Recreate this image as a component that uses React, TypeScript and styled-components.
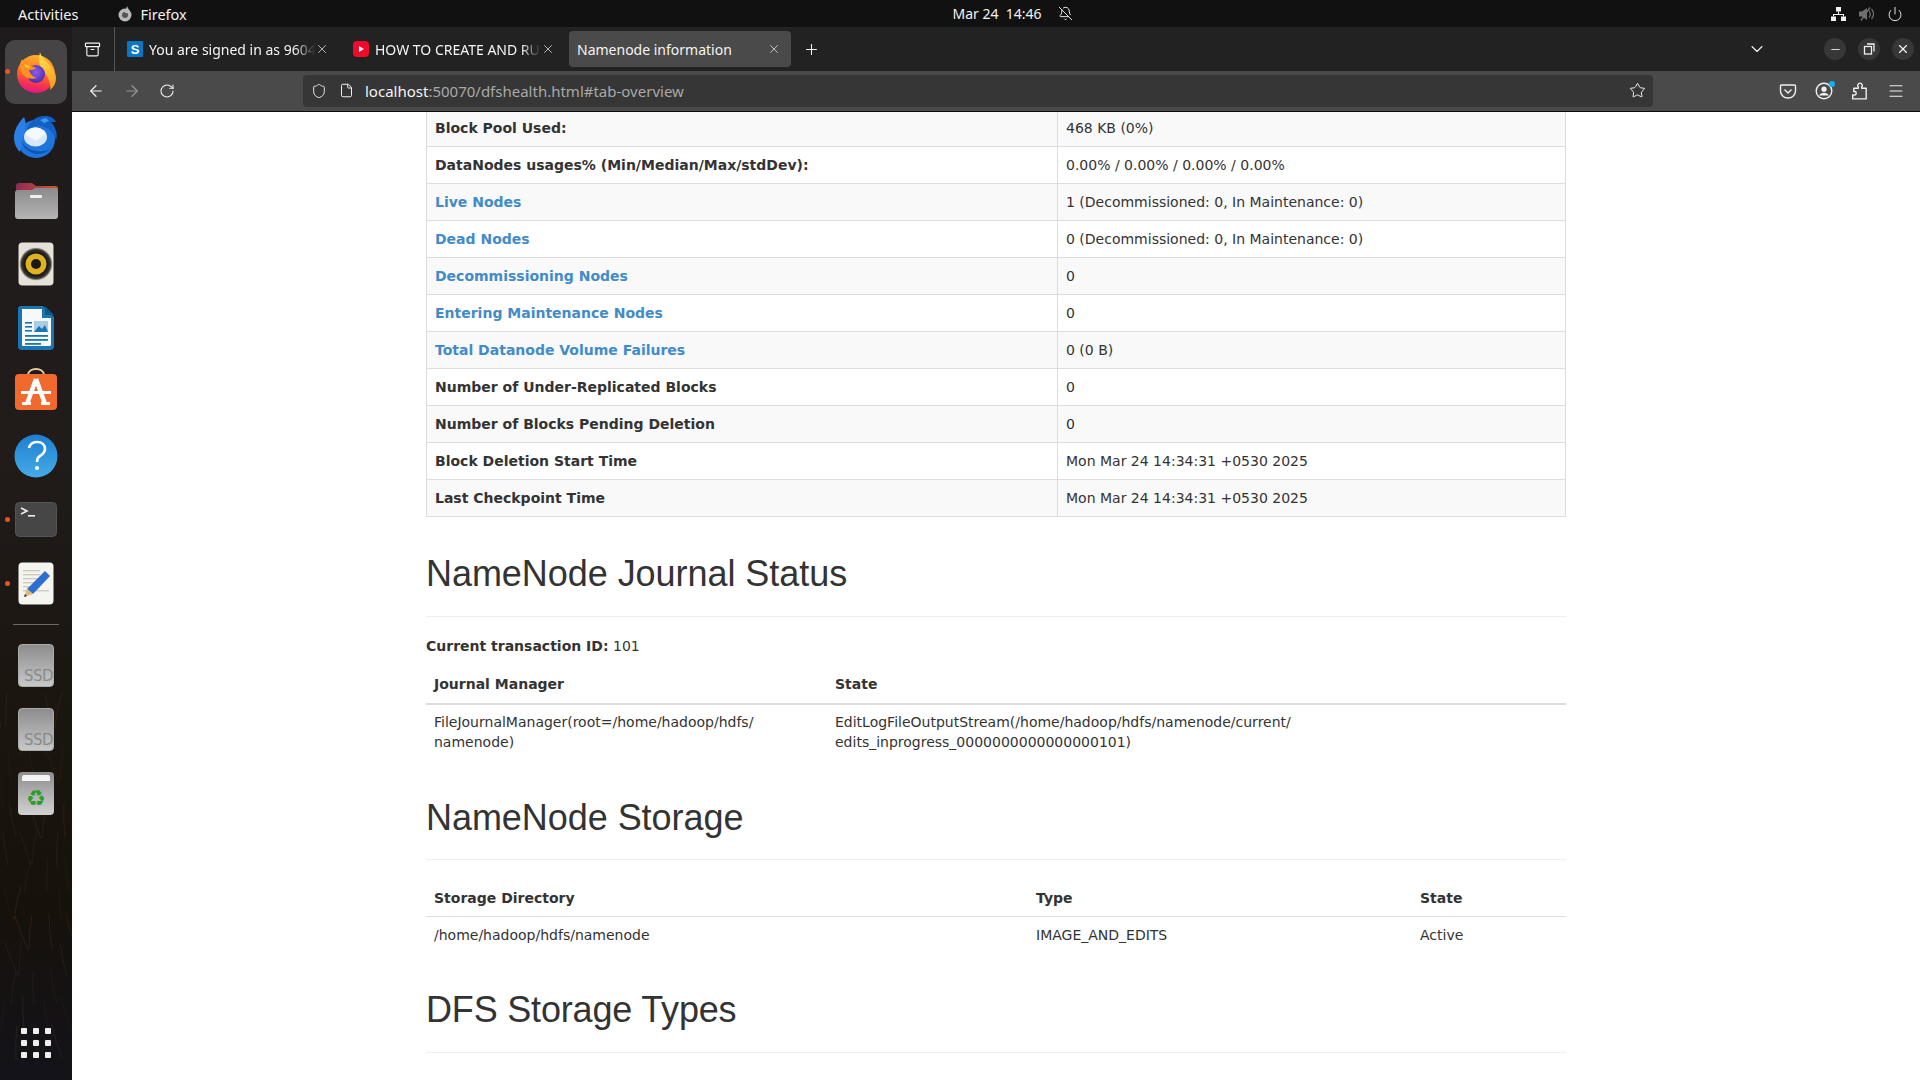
import React from 'react';
import styled, { createGlobalStyle } from 'styled-components';
import { ArrowLeft, ArrowRight, RotateCw, Shield, File, Star, Menu, ChevronDown, Plus, X, Minus, BellOff, Power, Archive } from 'lucide-react';

const Global = createGlobalStyle`
  html, body { margin: 0; padding: 0; width: 1920px; height: 1080px; overflow: hidden; background: #111; }
  * { box-sizing: border-box; }
`;

const Screen = styled.div`
  width: 1920px; height: 1080px; display: flex; flex-direction: column; overflow: hidden;
  font-family: "Noto Sans", sans-serif;
`;
const TopBar = styled.header`
  height: 27px; flex: none; background: #111111; color: #f2f2f2; display: grid;
  grid-template-columns: 1fr auto 1fr; align-items: center; padding: 0 17px 0 18px; font-size: 14.5px;
`;
const TopLeft = styled.div`display: flex; align-items: center;`;
const AppName = styled.span`display: flex; align-items: center; gap: 7px; margin-left: 39px;`;
const Clock = styled.div`display: flex; align-items: center; gap: 16px; margin-left: 104px; font-size: 14px;`;
const TopRight = styled.div`display: flex; align-items: center; justify-content: flex-end; gap: 13px;`;
const Main = styled.div`flex: 1; display: flex; min-height: 0;`;

const Dock = styled.nav`
  width: 72px; flex: none; position: relative; padding: 13px 0 0; display: flex; flex-direction: column; align-items: center;
  background: linear-gradient(180deg, #1f1b1c 0%, #211c1a 40%, #1c1611 62%, #17110c 85%, #13131a 100%);
  overflow: hidden;
`;
const Strands = styled.svg`position: absolute; left: 0; top: 0;`;
const DockItem = styled.div<{ $active?: boolean }>`
  width: 62px; height: 64px; flex: none; position: relative; display: flex; align-items: center; justify-content: center;
  border-radius: 10px; background: ${p => (p.$active ? '#464444' : 'transparent')};
  svg { overflow: visible; }
`;
const RunDot = styled.span`
  position: absolute; left: 0px; top: 29px; width: 5px; height: 5px; border-radius: 50%; background: #e95420;
`;
const DockRule = styled.div`
  width: 46px; height: 1px; background: #6d6966; margin: 8px 0; flex: none; position: relative;
`;
const GridBtn = styled.div`
  margin-top: auto; margin-bottom: 22px; display: grid; grid-template-columns: repeat(3, 6px); gap: 6px; position: relative;
`;
const GridDot = styled.span`width: 6px; height: 6px; border-radius: 1px; background: #eeeeee;`;

const Browser = styled.div`flex: 1; min-width: 0; display: flex; flex-direction: column;`;
const TabBar = styled.div`height: 44px; flex: none; background: #222222; display: flex; align-items: center; color: #f4f4f4;`;
const ViewBtn = styled.div`width: 43px; height: 44px; display: flex; align-items: center; justify-content: center; border-right: 1px solid #555; padding-right: 2px; flex: none;`;
const Tab = styled.div<{ $active?: boolean }>`
  width: 222px; height: 36px; margin: 0 2px; flex: none; border-radius: 4px; display: flex; align-items: center;
  padding: 0 10px 0 ${p => (p.$active ? 8 : 10)}px; font-size: 14px; gap: 6px;
  background: ${p => (p.$active ? '#4a4a4a' : 'transparent')};
`;
const Favicon = styled.span<{ $bg: string; $r: number }>`
  width: 16px; height: 16px; flex: none; background: ${p => p.$bg}; border-radius: ${p => p.$r}px; color: #fff;
  display: flex; align-items: center; justify-content: center; font: bold 13px "Liberation Sans", sans-serif;
`;
const TabTitle = styled.span<{ $fade?: boolean }>`
  flex: 1; min-width: 0; overflow: hidden; white-space: nowrap; margin-right: -6px;
  ${p => p.$fade && 'mask-image: linear-gradient(90deg, #000 88%, transparent 100%);'}
`;
const TabSpacer = styled.div`flex: 1;`;
const NewTab = styled.div`margin-left: 10px; display: flex;`;
const TabList = styled.div`width: 30px; margin-right: 52px; display: flex; justify-content: center;`;
const WinControls = styled.div`display: flex; gap: 12px; margin-right: 6px;`;
const WinBtn = styled.div`width: 22px; height: 22px; border-radius: 50%; background: #373737; display: flex; align-items: center; justify-content: center;`;

const ToolBar = styled.div`
  height: 41px; flex: none; background: #4a4a4a; border-bottom: 1px solid #0c0c0c; display: flex; align-items: center;
  padding: 0 0 1px 15px; color: #f0f0f0;
`;
const NavIcon = styled.div<{ $dim?: boolean }>`
  width: 36px; display: flex; justify-content: flex-start; opacity: ${p => (p.$dim ? 0.45 : 1)};
`;
const UrlBar = styled.div`
  width: 1350px; height: 32px; margin-left: 108px; background: #363636; border-radius: 4px; display: flex; align-items: center;
  padding: 0 7px 0 8px; font-size: 15px;
`;
const UrlIcons = styled.div`display: flex; gap: 12px; align-items: center; width: 54px; flex: none;`;
const UrlText = styled.div`flex: 1; color: #a9a9a9; white-space: nowrap;`;
const UrlHost = styled.span`color: #f4f4f4;`;
const ToolRight = styled.div`margin-left: 126px; display: flex; gap: 18px; align-items: center;`;
const Badged = styled.div`position: relative; display: flex;`;
const Badge = styled.span`position: absolute; right: -2px; top: -1px; width: 6px; height: 6px; border-radius: 50%; background: #0db4f0;`;

const Page = styled.main`
  flex: 1; min-height: 0; overflow: hidden; background: #fff; color: #333;
  font: 14px/20px "DejaVu Sans", sans-serif;
`;
const Container = styled.div`width: 1170px; margin: -3px 0 0 339px; padding: 0 15px;`;
const Table = styled.table<{ $bordered?: boolean }>`
  width: 100%; border-collapse: collapse; table-layout: fixed; margin-bottom: 20px;
  ${p => p.$bordered && 'border: 1px solid #ddd;'}
`;
const Row = styled.tr<{ $striped?: boolean }>`background: ${p => (p.$striped ? '#f9f9f9' : '#fff')};`;
const Th = styled.th<{ $bordered?: boolean; $w?: number; $rule?: number }>`
  text-align: left; font-weight: bold; padding: 8px; vertical-align: top;
  ${p => p.$w && `width: ${p.$w}px;`}
  ${p => (p.$bordered ? 'border: 1px solid #ddd;' : `border-bottom: ${p.$rule ?? 2}px solid #ddd;`)}
`;
const Td = styled.td<{ $bordered?: boolean }>`
  padding: 8px; vertical-align: top;
  ${p => p.$bordered && 'border: 1px solid #ddd;'}
`;
const JournalTh = styled(Th)`padding-bottom: 9px;`;
const JournalTd = styled(Td)`padding-top: 7px;`;
const Link = styled.a`color: #428bca; text-decoration: none;`;
const PageHeader = styled.div<{ $top: number; $bottom: number }>`
  margin: ${p => p.$top}px 0 ${p => p.$bottom}px; padding-bottom: 9px; border-bottom: 1px solid #eee;
`;
const H1 = styled.h1<{ $tight?: boolean; $gap: number }>`
  margin: 0 0 ${p => p.$gap}px; font: 500 36px/39px "Liberation Sans", Arial, sans-serif; color: #333;
  letter-spacing: ${p => (p.$tight ? -0.18 : -0.05)}px;
`;
const Para = styled.p`margin: 0 0 10px;`;

const Firefox = () => (
  <svg width="40" height="41" viewBox="0 0 40 41">
    <defs>
      <linearGradient id="ff1" x1="0.6" y1="0" x2="0.4" y2="1"><stop offset="0" stopColor="#ffb52e" /><stop offset="0.5" stopColor="#ff6a2a" /><stop offset="0.8" stopColor="#f52e54" /><stop offset="1" stopColor="#e0188c" /></linearGradient>
      <linearGradient id="ff3" x1="0.3" y1="0" x2="0.7" y2="1"><stop offset="0" stopColor="#ffe14a" /><stop offset="1" stopColor="#ff9a1e" /></linearGradient>
      <radialGradient id="ff2" cx="0.5" cy="0.4" r="0.65"><stop offset="0" stopColor="#8f5ce8" /><stop offset="1" stopColor="#4429ad" /></radialGradient>
    </defs>
    <circle cx="20" cy="22" r="19" fill="url(#ff1)" />
    <path d="M24 0c1 5 5 8 9 12 5 5 7 10 7 14 0 5-2 9-6 12 1-3 0-8-2-12-2-5-6-8-8-12-1-5-1-10 0-14z" fill="url(#ff3)" />
    <circle cx="20" cy="22" r="9" fill="url(#ff2)" />
    <path d="M6 7c1 3 3 4 5 5 3-2 6-2 9-1-3 0-5 1-6 3 3 1 5 1 6 2-2 2-5 2-7 2 1 4 4 7 8 8-6 2-14 0-16-8-1-4-1-8 1-11z" fill="#ff9320" />
    <path d="M8 12c3 1 5 2 6 3-2 2-5 0-6-3z" fill="#ffd23a" />
  </svg>
);
const Thunderbird = () => (
  <svg width="44" height="43" viewBox="0 0 44 43">
    <circle cx="22" cy="24" r="19" fill="#1f74dd" />
    <path d="M10 2C4 8 0 15 0 23c0 6 3 11 6 14 2-8 3-15 5-22 1-4 1-9-1-13z" fill="#2a80e6" />
    <path d="M7 26c2 7 8 12 16 13 5 0 10-2 14-5-5 2-10 3-15 2-7-1-12-5-15-10z" fill="#0c56b5" />
    <path d="M13 15C15 6 23 0 32 1c4 0 8 2 10 6h-5c2 2 4 5 5 9 1 3 1 6 0 9-2-6-5-11-12-13-6-2-12-1-17 3z" fill="#1260c4" />
    <path d="M26 5l6-2 3 3-5 2z" fill="#3f9bee" />
    <ellipse cx="21.500" cy="22" rx="11.500" ry="9.500" fill="#d8e6fa" />
    <path d="M11 19l10.500 7 10.500-7c-2-4-6-6.500-10.500-6.500S13 15 11 19z" fill="#f5f8fe" />
  </svg>
);
const Folder = () => (
  <svg width="44" height="40" viewBox="0 0 44 40">
    <defs>
      <linearGradient id="fo1" x1="0" x2="1"><stop offset="0" stopColor="#8d2d55" /><stop offset="1" stopColor="#d6552a" /></linearGradient>
      <linearGradient id="fo2" x1="0" y1="0" x2="0" y2="1"><stop offset="0" stopColor="#8a8a8a" /><stop offset="1" stopColor="#b5b5b5" /></linearGradient>
    </defs>
    <path d="M2 6a3 3 0 0 1 3-3h13l4 3h19a3 3 0 0 1 3 3v14H2z" fill="url(#fo1)" />
    <path d="M1 12a3 3 0 0 1 3-2h14l3-2h20a3 3 0 0 1 3 3v25a3 3 0 0 1-3 3H4a3 3 0 0 1-3-3z" fill="url(#fo2)" />
    <rect x="16" y="15" width="12" height="3" rx="1" fill="#f0f0f0" />
  </svg>
);
const Rhythmbox = () => (
  <svg width="36" height="44" viewBox="0 0 36 44">
    <defs><radialGradient id="rb"><stop offset="0.72" stopColor="#1d1c1a" /><stop offset="0.88" stopColor="#3a3834" /><stop offset="1" stopColor="#cfcbc1" /></radialGradient></defs>
    <rect x="0.5" y="0.5" width="35" height="43" rx="4" fill="#e6e2d8" />
    <circle cx="18" cy="22" r="16.500" fill="url(#rb)" />
    <circle cx="18" cy="22" r="10.500" fill="#e0b21f" />
    <circle cx="18" cy="22" r="5" fill="#1a1917" />
  </svg>
);
const Writer = () => (
  <svg width="36" height="44" viewBox="0 0 36 44">
    <path d="M3 0h22l11 11v29a4 4 0 0 1-4 4H4a4 4 0 0 1-4-4V3a3 3 0 0 1 3-3z" fill="#1b75ae" />
    <path d="M4 3h20v9h9v27a2 2 0 0 1-1 1H5a1 1 0 0 1-1-1z" fill="#f6f9fb" />
    <path d="M27 0l9 9h-9z" fill="#0f5a8b" />
    <rect x="7" y="16" width="7" height="1.6" fill="#1b75ae" />
    <rect x="7" y="20" width="7" height="1.6" fill="#1b75ae" />
    <rect x="7" y="24" width="7" height="1.6" fill="#1b75ae" />
    <rect x="16" y="15" width="14" height="11" fill="#a9cde3" />
    <path d="M16 26l5-6 3 3 3-4 3 7z" fill="#1b75ae" />
    <rect x="7" y="29" width="23" height="1.8" fill="#1b75ae" />
    <rect x="7" y="33" width="23" height="1.8" fill="#1b75ae" />
    <rect x="7" y="37" width="16" height="1.8" fill="#1b75ae" />
  </svg>
);
const AppCenter = () => (
  <svg width="44" height="44" viewBox="0 0 44 44">
    <path d="M14 5c0-8 16-8 16 0" fill="none" stroke="#e8c9a0" strokeWidth="2" />
    <rect x="1" y="4" width="42" height="36" rx="4" fill="#f2692e" />
    <path d="M22 9L13 34M22 9l9 25" fill="none" stroke="#fff" strokeWidth="4.500" />
    <rect x="7" y="21" width="30" height="3" fill="#fff" />
    <rect x="8" y="32" width="9" height="3" fill="#fff" />
    <rect x="27" y="32" width="9" height="3" fill="#fff" />
  </svg>
);
const Help = () => (
  <svg width="44" height="44" viewBox="0 0 44 44">
    <defs><linearGradient id="he" x1="0" y1="0" x2="0" y2="1"><stop offset="0" stopColor="#1e7fd0" /><stop offset="1" stopColor="#45abe8" /></linearGradient></defs>
    <circle cx="22" cy="22" r="21.500" fill="url(#he)" />
    <path d="M15 14c1-4 4-6 8-6 5 0 8 3 8 7 0 3-2 5-5 7-2 1-3 3-3 6" fill="none" stroke="#fff" strokeWidth="2.600" />
    <circle cx="23" cy="34" r="2" fill="#fff" />
  </svg>
);
const Terminal = () => (
  <svg width="42" height="36" viewBox="0 0 42 36">
    <rect x="0.5" y="0.5" width="41" height="34" rx="4" fill="#464646" stroke="#555" />
    <path d="M6 6l6 3-6 3" fill="none" stroke="#eee" strokeWidth="1.600" />
    <rect x="13" y="13" width="7" height="1.600" fill="#eee" />
  </svg>
);
const TextEditor = () => (
  <svg width="36" height="44" viewBox="0 0 36 44">
    <rect x="0.5" y="0.5" width="35" height="42" rx="4" fill="#f4f4f1" />
    {[8, 12, 16, 20, 24, 28].map(y => <rect key={y} x="5" y={y} width={y === 28 ? 26 : 17} height="1.400" fill="#cfcabb" />)}
    <path d="M27 9l5 5-17 18-6-5z" fill="#2d6fd0" />
    <path d="M9 27l6 5-9 3z" fill="#e3b877" />
    <path d="M6 35l1-3 2 2z" fill="#333" />
  </svg>
);
const SsdIcon = styled.div`
  width: 36px; height: 43px; border-radius: 4px; background: linear-gradient(180deg, #8d8d8d, #c8c8c8); border: 1px solid #aaa;
  position: relative; overflow: hidden; display: flex; align-items: flex-end; justify-content: flex-end;
  color: #8a8a8a; font: 15px/19px "DejaVu Sans", sans-serif; letter-spacing: -0.5px;
`;
const TrashIcon = styled.div`
  width: 36px; height: 43px; border-radius: 4px; background: linear-gradient(180deg, #8e8e8e, #d2d2d2);
  position: relative; display: flex; align-items: flex-end; justify-content: center; padding-bottom: 3px;
  color: #2a9d2a; font: 22px/26px "DejaVu Sans", sans-serif;
`;
const TrashLid = styled.span`
  position: absolute; left: 4px; right: 4px; top: 3px; height: 6px; background: #f4f4f4; border-radius: 2px 2px 0 0;
`;
const Pocket = () => (
  <svg width="18" height="18" viewBox="0 0 18 18" fill="none" stroke="currentColor" strokeWidth="1.400">
    <path d="M2.500 3h13a1 1 0 0 1 1 1v5a7.500 7 0 0 1-15 0V4a1 1 0 0 1 1-1z" />
    <path d="M5.500 7.500L9 11l3.500-3.500" />
  </svg>
);
const NetworkGlyph = () => (
  <svg width="15" height="14" viewBox="0 0 15 14" fill="#f2f2f2">
    <rect x="5" y="0" width="5" height="4.500" />
    <rect x="0" y="9.500" width="5" height="4.500" />
    <rect x="10" y="9.500" width="5" height="4.500" />
    <path d="M7 4.500h1V7h5v2.500h-1V8H3v1.500H2V7h5z" />
  </svg>
);
const MutedGlyph = () => (
  <svg width="15" height="14" viewBox="0 0 15 14" fill="none">
    <path d="M0 4.500h3L8 1v12L3 9.500H0z" fill="#6f6f6f" />
    <path d="M10 3.500c1.500 2 1.500 5 0 7M12.500 2c2.500 3 2.500 7 0 10" stroke="#6f6f6f" strokeWidth="1.200" />
    <path d="M11 0.500L2 13.500" stroke="#6f6f6f" strokeWidth="1.400" />
  </svg>
);
const RestoreGlyph = () => (
  <svg width="12" height="12" viewBox="0 0 12 12" fill="none" stroke="#f0f0f0" strokeWidth="1.300">
    <rect x="1.500" y="3.500" width="7" height="7.500" />
    <path d="M4 1h7v7.500" />
  </svg>
);
const AccountGlyph = () => (
  <svg width="18" height="18" viewBox="0 0 18 18">
    <circle cx="9" cy="9" r="7.800" fill="none" stroke="currentColor" strokeWidth="1.400" />
    <circle cx="9" cy="7.200" r="2.600" fill="currentColor" />
    <path d="M4 13.500c1-2 3-2.800 5-2.800s4 .8 5 2.800z" fill="currentColor" />
  </svg>
);
const ExtensionGlyph = () => (
  <svg width="18" height="18" viewBox="0 0 16 16" fill="none" stroke="currentColor" strokeWidth="1.250" strokeLinejoin="round">
    <path d="M1.500 15h12V5.500h-4v-1c1-1 .5-3.500-1.500-3.500S5.500 3.500 6.500 4.500v1h-4v3h1c1.500 0 1.500 3 0 3h-2z" />
  </svg>
);
const Sheet = { strokeWidth: 1.6 };

const overviewRows: { k: string; v: string; link?: boolean }[] = [
  { k: 'Block Pool Used:', v: '468 KB (0%)' },
  { k: 'DataNodes usages% (Min/Median/Max/stdDev):', v: '0.00% / 0.00% / 0.00% / 0.00%' },
  { k: 'Live Nodes', v: '1 (Decommissioned: 0, In Maintenance: 0)', link: true },
  { k: 'Dead Nodes', v: '0 (Decommissioned: 0, In Maintenance: 0)', link: true },
  { k: 'Decommissioning Nodes', v: '0', link: true },
  { k: 'Entering Maintenance Nodes', v: '0', link: true },
  { k: 'Total Datanode Volume Failures', v: '0 (0 B)', link: true },
  { k: 'Number of Under-Replicated Blocks', v: '0' },
  { k: 'Number of Blocks Pending Deletion', v: '0' },
  { k: 'Block Deletion Start Time', v: 'Mon Mar 24 14:34:31 +0530 2025' },
  { k: 'Last Checkpoint Time', v: 'Mon Mar 24 14:34:31 +0530 2025' },
];

const strands = Array.from({ length: 46 }, (_, i) => {
  const x = (i * 29) % 72;
  const y = 640 + ((i * 83) % 360);
  const dx = ((i * 7) % 11) - 5;
  return { d: `M${x} ${y}q${dx} 16 ${dx * 2 + 3} 34`, o: 0.12 + ((i * 13) % 10) / 45 };
});

export default function App() {
  return (
    <Screen>
      <Global />
      <TopBar>
        <TopLeft>
          <span>Activities</span>
          <AppName>
            <svg width="16" height="16" viewBox="0 0 16 16"><circle cx="8" cy="9" r="6.500" fill="#b9b9b9" /><circle cx="8" cy="9" r="3" fill="#555" /><path d="M10 0c1 3 3 4 3 7H8z" fill="#b9b9b9" /></svg>
            Firefox
          </AppName>
        </TopLeft>
        <Clock>
          <span>Mar 24&nbsp; 14:46</span>
          <BellOff size={15} strokeWidth={1.5} />
        </Clock>
        <TopRight>
          <NetworkGlyph />
          <MutedGlyph />
          <Power size={16} strokeWidth={1.4} />
        </TopRight>
      </TopBar>
      <Main>
        <Dock>
          <Strands width="72" height="1053" viewBox="0 0 72 1053" fill="none" stroke="#5a3d22" strokeWidth="1">
            {strands.map((s, i) => <path key={i} d={s.d} opacity={s.o} />)}
          </Strands>
          <DockItem $active><RunDot /><Firefox /></DockItem>
          <DockItem><Thunderbird /></DockItem>
          <DockItem><Folder /></DockItem>
          <DockItem><Rhythmbox /></DockItem>
          <DockItem><Writer /></DockItem>
          <DockItem><AppCenter /></DockItem>
          <DockItem><Help /></DockItem>
          <DockItem><RunDot /><Terminal /></DockItem>
          <DockItem><RunDot /><TextEditor /></DockItem>
          <DockRule />
          <DockItem><SsdIcon>SSD</SsdIcon></DockItem>
          <DockItem><SsdIcon>SSD</SsdIcon></DockItem>
          <DockItem><TrashIcon><TrashLid />♻</TrashIcon></DockItem>
          <GridBtn>{Array.from({ length: 9 }, (_, i) => <GridDot key={i} />)}</GridBtn>
        </Dock>
        <Browser>
          <TabBar>
            <ViewBtn><Archive size={17} {...Sheet} /></ViewBtn>
            <Tab>
              <Favicon $bg="#0a76c4" $r={1}>S</Favicon>
              <TabTitle $fade>You are signed in as 9604</TabTitle>
              <X size={14} strokeWidth={1.2} />
            </Tab>
            <Tab>
              <Favicon $bg="#f00a2c" $r={4}><svg width="8" height="8" viewBox="0 0 8 8"><path d="M2 1l5 3-5 3z" fill="#fff" /></svg></Favicon>
              <TabTitle $fade>HOW TO CREATE AND RU</TabTitle>
              <X size={14} strokeWidth={1.2} />
            </Tab>
            <Tab $active>
              <TabTitle>Namenode information</TabTitle>
              <X size={14} strokeWidth={1.2} />
            </Tab>
            <NewTab><Plus size={17} strokeWidth={1.5} /></NewTab>
            <TabSpacer />
            <TabList><ChevronDown size={20} strokeWidth={1.3} /></TabList>
            <WinControls>
              <WinBtn><Minus size={13} strokeWidth={1.6} /></WinBtn>
              <WinBtn><RestoreGlyph /></WinBtn>
              <WinBtn><X size={14} strokeWidth={2} /></WinBtn>
            </WinControls>
          </TabBar>
          <ToolBar>
            <NavIcon><ArrowLeft size={18} {...Sheet} /></NavIcon>
            <NavIcon $dim><ArrowRight size={18} {...Sheet} /></NavIcon>
            <NavIcon><RotateCw size={16} {...Sheet} /></NavIcon>
            <UrlBar>
              <UrlIcons><Shield size={16} strokeWidth={1.4} /><File size={15} strokeWidth={1.6} /></UrlIcons>
              <UrlText><UrlHost>localhost</UrlHost>:50070/dfshealth.html#tab-overview</UrlText>
              <Star size={17} strokeWidth={1.4} />
            </UrlBar>
            <ToolRight>
              <Pocket />
              <Badged><AccountGlyph /><Badge /></Badged>
              <ExtensionGlyph />
              <Menu size={18} strokeWidth={1.4} />
            </ToolRight>
          </ToolBar>
          <Page>
            <Container>
              <Table $bordered>
                <tbody>
                  {overviewRows.map((r, i) => (
                    <Row key={r.k} $striped={i % 2 === 0}>
                      <Th $bordered $w={631}>{r.link ? <Link href="#">{r.k}</Link> : r.k}</Th>
                      <Td $bordered>{r.v}</Td>
                    </Row>
                  ))}
                </tbody>
              </Table>
              <PageHeader $top={37} $bottom={19}><H1 $gap={14}>NameNode Journal Status</H1></PageHeader>
              <Para><b>Current transaction ID:</b> 101</Para>
              <Table>
                <thead>
                  <tr><JournalTh $w={401}>Journal Manager</JournalTh><JournalTh>State</JournalTh></tr>
                </thead>
                <tbody>
                  <tr>
                    <JournalTd>FileJournalManager(root=/home/hadoop/hdfs/<br />namenode)</JournalTd>
                    <JournalTd>EditLogFileOutputStream(/home/hadoop/hdfs/namenode/current/<br />edits_inprogress_0000000000000000101)</JournalTd>
                  </tr>
                </tbody>
              </Table>
              <PageHeader $top={38} $bottom={20}><H1 $gap={13}>NameNode Storage</H1></PageHeader>
              <Table>
                <thead>
                  <tr><Th $w={602} $rule={1}>Storage Directory</Th><Th $w={384} $rule={1}>Type</Th><Th $rule={1}>State</Th></tr>
                </thead>
                <tbody>
                  <tr><Td>/home/hadoop/hdfs/namenode</Td><Td>IMAGE_AND_EDITS</Td><Td>Active</Td></tr>
                </tbody>
              </Table>
              <PageHeader $top={37} $bottom={20}><H1 $tight $gap={14}>DFS Storage Types</H1></PageHeader>
            </Container>
          </Page>
        </Browser>
      </Main>
    </Screen>
  );
}
